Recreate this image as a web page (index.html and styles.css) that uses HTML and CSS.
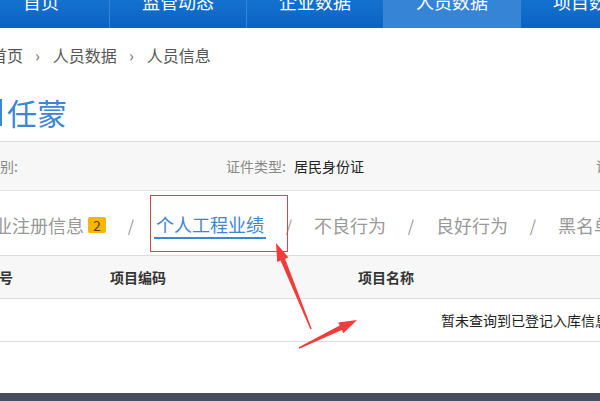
FILE: index.html
```html
<!DOCTYPE html>
<html>
<head>
<meta charset="utf-8">
<title>人员信息</title>
<link rel="stylesheet" href="styles.css">
</head>
<body>
<div class="page">
  <ul class="nav">
    <li><a href="#">首页</a></li>
    <li><a href="#">监管动态</a></li>
    <li><a href="#">企业数据</a></li>
    <li class="current"><a href="#">人员数据</a></li>
    <li><a href="#">项目数据</a></li>
    <li><a href="#">信用评价</a></li>
  </ul>

  <div class="crumbs">
    <a href="#">首页</a><span class="sep">›</span><a href="#">人员数据</a><span class="sep">›</span><span>人员信息</span>
  </div>

  <h2 class="person"><span class="mark"></span>任蒙</h2>

  <div class="info">
    <div class="field f1"><span class="label">性别:</span></div>
    <div class="field f2"><span class="label">证件类型:</span><span class="value">居民身份证</span></div>
    <div class="field"><span class="label">证件号码:</span><span class="value"></span></div>
  </div>

  <div class="tabs">
    <a href="#">企业注册信息</a><span class="badge">2</span>
    <span class="slash">/</span>
    <a href="#" class="active">个人工程业绩</a>
    <span class="slash">/</span>
    <a href="#">不良行为</a>
    <span class="slash">/</span>
    <a href="#">良好行为</a>
    <span class="slash">/</span>
    <a href="#">黑名单记录</a>
  </div>

  <table class="grid">
    <thead>
      <tr>
        <th class="c1">序号</th>
        <th class="c2">项目编码</th>
        <th>项目名称</th>
      </tr>
    </thead>
    <tbody>
      <tr>
        <td colspan="3" class="empty">暂未查询到已登记入库信息</td>
      </tr>
    </tbody>
  </table>

  <div class="footer"></div>
</div>

<!-- annotation drawn over the page -->
<svg class="marks" width="600" height="401" viewBox="0 0 600 401">
  <rect x="150.5" y="195.5" width="137" height="56" fill="none" stroke="#d8474d" stroke-width="1"/>
  <polygon fill="#f23b3b" points="276,243 288.4,257.4 285.1,258.8 311.7,328.7 310.3,329.3 280.5,260.6 277.2,262"/>
  <polygon fill="#f23b3b" points="357,320 343.4,333.2 341.9,330 299.3,348.7 298.7,347.3 339.7,325.6 338.2,322.4"/>
</svg>
</body>
</html>
```

FILE: styles.css
```css
body {
  margin: 0;
  overflow: hidden;
  background: #fff;
  font-family: "Noto Sans CJK SC", "Noto Sans", sans-serif;
  color: #333;
}

a {
  text-decoration: none;
  color: inherit;
}

.page {
  width: 1104px;
  margin-left: -27px;
}

/* top menu */
.nav {
  display: flex;
  margin: -18px 0 0 0;
  padding: 0;
  list-style: none;
  height: 46px;
  background: linear-gradient(#1a7bd8, #0b62c3);
}

.nav li {
  box-sizing: border-box;
  flex: none;
  width: 137px;
  border-right: 1px solid #3189df;
  text-align: center;
  font-size: 18px;
  line-height: 38px;
  color: #fff;
}

.nav li.current {
  background: #3584d6;
}

/* breadcrumb */
.crumbs {
  height: 54px;
  line-height: 54px;
  padding-left: 18px;
  font-size: 16px;
  color: #555;
}

.crumbs .sep {
  margin: 0 13px 0 12px;
  color: #777;
}

/* person name */
.person {
  display: flex;
  align-items: center;
  height: 59px;
  margin: 0;
  padding-left: 27px;
  font-size: 30px;
  font-weight: normal;
  color: #3d86d1;
}

.person .mark {
  width: 2px;
  height: 27px;
  margin: 2px 5px 0 0;
  background: #3d86d1;
}

/* basic info bar */
.info {
  display: flex;
  height: 48px;
  line-height: 48px;
  padding-left: 13px;
  border-top: 1px solid #dcdcdc;
  border-bottom: 1px solid #e3e3e3;
  background: #f7f7f7;
  font-size: 14px;
}

.info .field {
  flex: none;
}

.info .f1 {
  width: 240px;
}

.info .f2 {
  width: 370px;
}

.info .label {
  color: #888;
  margin-right: 8px;
}

.info .value {
  color: #222;
}

/* tabs */
.tabs {
  display: flex;
  align-items: center;
  height: 65px;
  padding: 3px 0 0 3px;
  box-sizing: border-box;
  border-bottom: 1px solid #dcdcdc;
  font-size: 18px;
  color: #999;
}

.tabs a {
  line-height: 24px;
}

.tabs a.active {
  margin: 0 -2px;
  padding: 1px 2px 1px;
  border-bottom: 2px solid #3d86d1;
  color: #3d86d1;
}

.tabs .badge {
  width: 18px;
  height: 16px;
  margin: 1px 0 0 4px;
  border-radius: 2px;
  background: #f6b700;
  color: #5a4200;
  font-size: 14px;
  line-height: 16px;
  text-align: center;
}

.tabs .slash {
  width: 50px;
  text-align: center;
  font-size: 16px;
  color: #999;
}

/* result table */
.grid {
  width: 100%;
  border-collapse: collapse;
  font-size: 14px;
}

.grid th {
  height: 42px;
  padding: 0 0 0 12px;
  border-bottom: 1px solid #dcdcdc;
  background: #f7f7f7;
  text-align: left;
  color: #333;
}

.grid th.c1 {
  width: 113px;
}

.grid th.c2 {
  width: 236px;
}

.grid td {
  height: 42px;
  padding: 0;
  border-bottom: 1px solid #dcdcdc;
}

.grid .empty {
  text-align: center;
  color: #222;
}

.footer {
  height: 20px;
  margin-top: 51px;
  background: #464e60;
}

.marks {
  position: absolute;
  top: 0;
  left: 0;
  pointer-events: none;
}
```
